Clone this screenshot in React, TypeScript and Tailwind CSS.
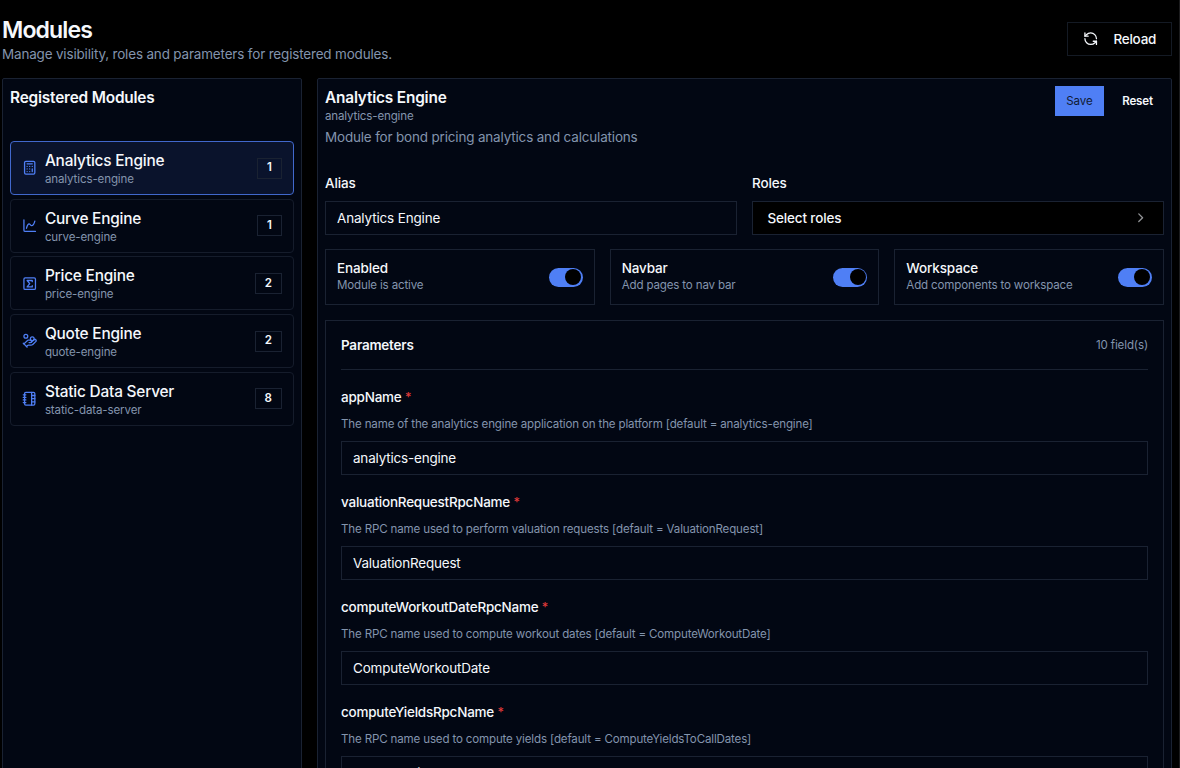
import { useState } from "react";
import {
  Calculator,
  ChartSpline,
  ChevronRight,
  HandCoins,
  NotebookTabs,
  RefreshCcw,
  SquareSigma,
  type LucideIcon,
} from "lucide-react";

interface RegisteredModule {
  id: string;
  name: string;
  count: number;
  icon: LucideIcon;
}

interface Parameter {
  name: string;
  description: string;
  value: string;
}

const modules: RegisteredModule[] = [
  { id: "analytics-engine", name: "Analytics Engine", count: 1, icon: Calculator },
  { id: "curve-engine", name: "Curve Engine", count: 1, icon: ChartSpline },
  { id: "price-engine", name: "Price Engine", count: 2, icon: SquareSigma },
  { id: "quote-engine", name: "Quote Engine", count: 2, icon: HandCoins },
  { id: "static-data-server", name: "Static Data Server", count: 8, icon: NotebookTabs },
];

const parameters: Parameter[] = [
  {
    name: "appName",
    description: "The name of the analytics engine application on the platform [default = analytics-engine]",
    value: "analytics-engine",
  },
  {
    name: "valuationRequestRpcName",
    description: "The RPC name used to perform valuation requests [default = ValuationRequest]",
    value: "ValuationRequest",
  },
  {
    name: "computeWorkoutDateRpcName",
    description: "The RPC name used to compute workout dates [default = ComputeWorkoutDate]",
    value: "ComputeWorkoutDate",
  },
  {
    name: "computeYieldsRpcName",
    description: "The RPC name used to compute yields [default = ComputeYieldsToCallDates]",
    value: "ComputeYieldsToCallDates",
  },
];

function ModuleItem({ module, selected, onSelect }: { module: RegisteredModule; selected: boolean; onSelect: () => void }) {
  const Icon = module.icon;
  return (
    <button
      type="button"
      onClick={onSelect}
      className={`flex h-[54px] w-full shrink-0 items-center rounded-[4px] border pr-[11.5px] pl-[11px] text-left ${
        selected ? "border-[#4168cc] bg-[#0a132c]" : "border-[#151c2b]"
      }`}
    >
      <Icon className="size-[15.4px] shrink-0 text-[#4f7ff5]" />
      <div className="ml-[7.5px] flex-1 pt-[2px]">
        <div className="text-[15.4px] leading-[20px] font-medium tracking-[-0.2px]">{module.name}</div>
        <div className="text-[11.55px] leading-[16px] tracking-[-0.12px] text-[#8394ad]">{module.id}</div>
      </div>
      <span className="flex h-[21px] items-center border border-[#1a2232] px-[8.6px] text-[11.55px] font-semibold">
        {module.count}
      </span>
    </button>
  );
}

function ToggleCard({ title, description }: { title: string; description: string }) {
  const [enabled, setEnabled] = useState(true);
  return (
    <div className="flex h-[56px] items-center justify-between border border-[#1a2232] px-[11px]">
      <div className="pb-px">
        <div className="text-[13.46px] leading-[19px] font-medium tracking-[-0.12px]">{title}</div>
        <div className="text-[11.55px] leading-[15.4px] tracking-[-0.15px] text-[#8394ad]">{description}</div>
      </div>
      <button
        type="button"
        role="switch"
        aria-checked={enabled}
        aria-label={title}
        onClick={() => setEnabled(!enabled)}
        className={`flex h-[19px] w-[34px] items-center rounded-full px-[1.5px] ${
          enabled ? "justify-end bg-[#4f7ff5]" : "justify-start bg-[#1a2232]"
        }`}
      >
        <span className="size-4 rounded-full bg-black" />
      </button>
    </div>
  );
}

function ParameterField({ parameter }: { parameter: Parameter }) {
  return (
    <div className="mb-[21.85px] h-[83px]">
      <div className="h-[19px] text-[13.46px] leading-[19px] font-medium tracking-[-0.2px]">
        {parameter.name} <span className="text-[12.5px] leading-none text-[#e03a3a]">*</span>
      </div>
      <p className="mt-[10px] text-[11.55px] leading-[15px] tracking-[-0.15px] text-[#8394ad]">{parameter.description}</p>
      <input
        defaultValue={parameter.value}
        className="mt-[9px] block h-[34px] w-full border border-[#1a2232] bg-transparent px-[11px] text-[13.46px] tracking-[-0.18px] outline-none"
      />
    </div>
  );
}

export default function App() {
  const [selectedId, setSelectedId] = useState("analytics-engine");

  return (
    <div className="flex h-screen w-full flex-col overflow-hidden border-r border-[#1c1c1e] bg-black pt-[17px] pr-[7px] pl-[2px] font-['Inter',sans-serif] text-[#f5f8fc]">
      <header className="flex h-[61px] shrink-0 justify-between">
        <div>
          <h1 className="text-[23.1px] leading-[26px] font-semibold tracking-[-0.9px]">Modules</h1>
          <p className="mt-[2px] text-[13.46px] leading-[19px] tracking-[-0.16px] text-[#8394ad]">
            Manage visibility, roles and parameters for registered modules.
          </p>
        </div>
        <button type="button" className="mt-[5px] flex h-[34px] w-[105px] items-center border border-[#141a24] pl-[15px] text-[13.46px] font-medium tracking-[-0.2px]">
          <RefreshCcw className="mr-[15px] size-[15.4px]" />
          Reload
        </button>
      </header>

      <main className="flex min-h-0 flex-1 gap-[15px]">
        {/* Module list */}
        <aside className="h-[720px] w-[300px] shrink-0 rounded-t-[2px] border border-[#1a2232] bg-[#020713] px-[7px] pt-[9px]">
          <h2 className="text-[15.4px] leading-5 font-semibold tracking-[-0.19px]">Registered Modules</h2>
          <div className="mt-[33px] flex flex-col gap-[3.7px]">
            {modules.map((module) => (
              <ModuleItem
                key={module.id}
                module={module}
                selected={module.id === selectedId}
                onSelect={() => setSelectedId(module.id)}
              />
            ))}
          </div>
        </aside>

        {/* Module details */}
        <section className="h-[800px] min-w-0 flex-1 rounded-t-[2px] border border-[#1a2232] bg-[#020713] px-[7px] pt-[7px]">
          <div className="flex h-[88px] justify-between">
            <div className="pt-[2px]">
              <h2 className="text-[15.4px] leading-5 font-semibold tracking-[-0.19px]">Analytics Engine</h2>
              <div className="text-[11.55px] leading-[17px] tracking-[-0.15px] text-[#8394ad]">analytics-engine</div>
              <p className="mt-[3px] text-[13.46px] leading-[19px] tracking-[-0.16px] text-[#8394ad]">
                Module for bond pricing analytics and calculations
              </p>
            </div>
            <div className="flex h-[30px] gap-[7px] text-[11.55px]">
              <button type="button" className="w-[49px] bg-[#4f7ff5] pt-px text-[#111b33]">Save</button>
              <button type="button" className="w-[53px] pt-px font-semibold tracking-[-0.15px]">Reset</button>
            </div>
          </div>

          <div className="grid grid-cols-2 gap-[15px] text-[13.46px] font-medium tracking-[-0.14px]">
            <div>
              <label className="block leading-[19px]">Alias</label>
              <input
                defaultValue="Analytics Engine"
                className="mt-[8px] block h-[34px] w-full border border-[#1a2232] bg-transparent px-[11px] font-normal outline-none"
              />
            </div>
            <div>
              <label className="block leading-[19px]">Roles</label>
              <button type="button" className="mt-[8px] flex h-[34px] w-full items-center justify-between border border-[#1a2232] bg-black pr-[15px] pl-[14.5px]">
                Select roles
                <ChevronRight className="size-[15.4px] text-[#929497]" />
              </button>
            </div>
          </div>

          <div className="mt-[14px] grid grid-cols-3 gap-[15px]">
            <ToggleCard title="Enabled" description="Module is active" />
            <ToggleCard title="Navbar" description="Add pages to nav bar" />
            <ToggleCard title="Workspace" description="Add components to workspace" />
          </div>

          <div className="mt-[15px] h-[520px] border border-[#1a2232] px-[15px]">
            <div className="mb-[18px] flex h-[49px] items-center justify-between border-b border-[#1a2232]">
              <h3 className="text-[13.46px] font-semibold tracking-[-0.2px]">Parameters</h3>
              <span className="pt-[2px] text-[11.55px] tracking-[-0.12px] text-[#8394ad]">10 field(s)</span>
            </div>
            {parameters.map((parameter) => (
              <ParameterField key={parameter.name} parameter={parameter} />
            ))}
          </div>
        </section>
      </main>
    </div>
  );
}
